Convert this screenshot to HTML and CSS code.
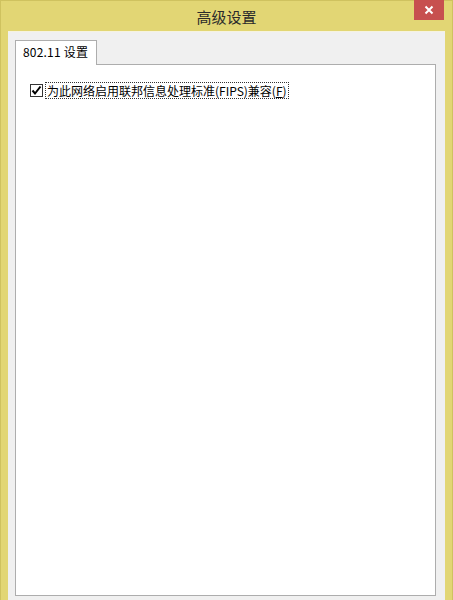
FILE: index.html
```html
<!DOCTYPE html>
<html>
<head>
<meta charset="utf-8">
<link rel="stylesheet" href="styles.css">
</head>
<body>
<div class="window">
  <div class="titlebar">
    <span class="title">高级设置</span>
    <div class="close">
      <svg width="10" height="10" viewBox="0 0 10 10"><path d="M1.5 1.5 L8.5 8.5 M8.5 1.5 L1.5 8.5" stroke="#fff" stroke-width="2" fill="none"/></svg>
    </div>
  </div>
  <div class="client">
    <div class="tabs">
      <div class="tab">802.11 设置</div>
    </div>
    <div class="panel">
      <div class="row">
        <span class="checkbox">
          <svg width="11" height="11" viewBox="0 0 11 11"><path d="M1.5 5.5 L4 8.5 L9.5 1.5" stroke="#000" stroke-width="2" fill="none"/></svg>
        </span>
        <span class="label">为此网络启用联邦信息处理标准(FIPS)兼容(<u>F</u>)</span>
      </div>
    </div>
  </div>
</div>
</body>
</html>
```
FILE: styles.css
```css
html, body {
  margin: 0;
  padding: 0;
  background: #e2d674;
}
.window {
  width: 453px;
  height: 600px;
  box-sizing: border-box;
  background: #e2d674;
  border-left: 1px solid #cfc25f;
  border-right: 1px solid #cfc25f;
  border-top: 1px solid #cfc25f;
  display: flex;
  flex-direction: column;
  padding: 0 7px;
  font-family: "Noto Sans CJK SC", "Noto Sans", sans-serif;
}
.titlebar {
  height: 30px;
  position: relative;
  display: flex;
  align-items: center;
  justify-content: center;
}
.title {
  font-size: 15px;
  color: #2b2b2b;
  line-height: 1;
}
.close {
  position: absolute;
  right: 1px;
  top: -1px;
  width: 30px;
  height: 20px;
  background: #c7504f;
  display: flex;
  align-items: center;
  justify-content: center;
}
.client {
  flex: 1;
  background: #f0f0f0;
  border-top: 1px solid #f6f3df;
  display: flex;
  flex-direction: column;
  padding: 8px 9px 4px 7px;
}
.tabs {
  display: flex;
  height: 24px;
  position: relative;
  z-index: 1;
}
.tab {
  width: 82px;
  height: 25px;
  box-sizing: border-box;
  background: #fff;
  border: 1px solid #adadad;
  border-bottom: none;
  font-size: 12px;
  color: #000;
  padding-left: 7px;
  line-height: 22px;
  letter-spacing: 0.2px;
}
.panel {
  flex: 1;
  background: #fff;
  border: 1px solid #adadad;
  padding: 17px 14px 0 14px;
}
.row {
  display: flex;
  align-items: center;
  gap: 2px;
}
.checkbox {
  width: 13px;
  height: 13px;
  box-sizing: border-box;
  border: 1px solid #333;
  background: #fff;
  display: flex;
  align-items: center;
  justify-content: center;
}
.label {
  font-size: 12px;
  color: #000;
  line-height: 15px;
  border: 1px dotted #333;
  padding: 0 1px;
}
.label u {
  text-decoration: underline;
}
```
